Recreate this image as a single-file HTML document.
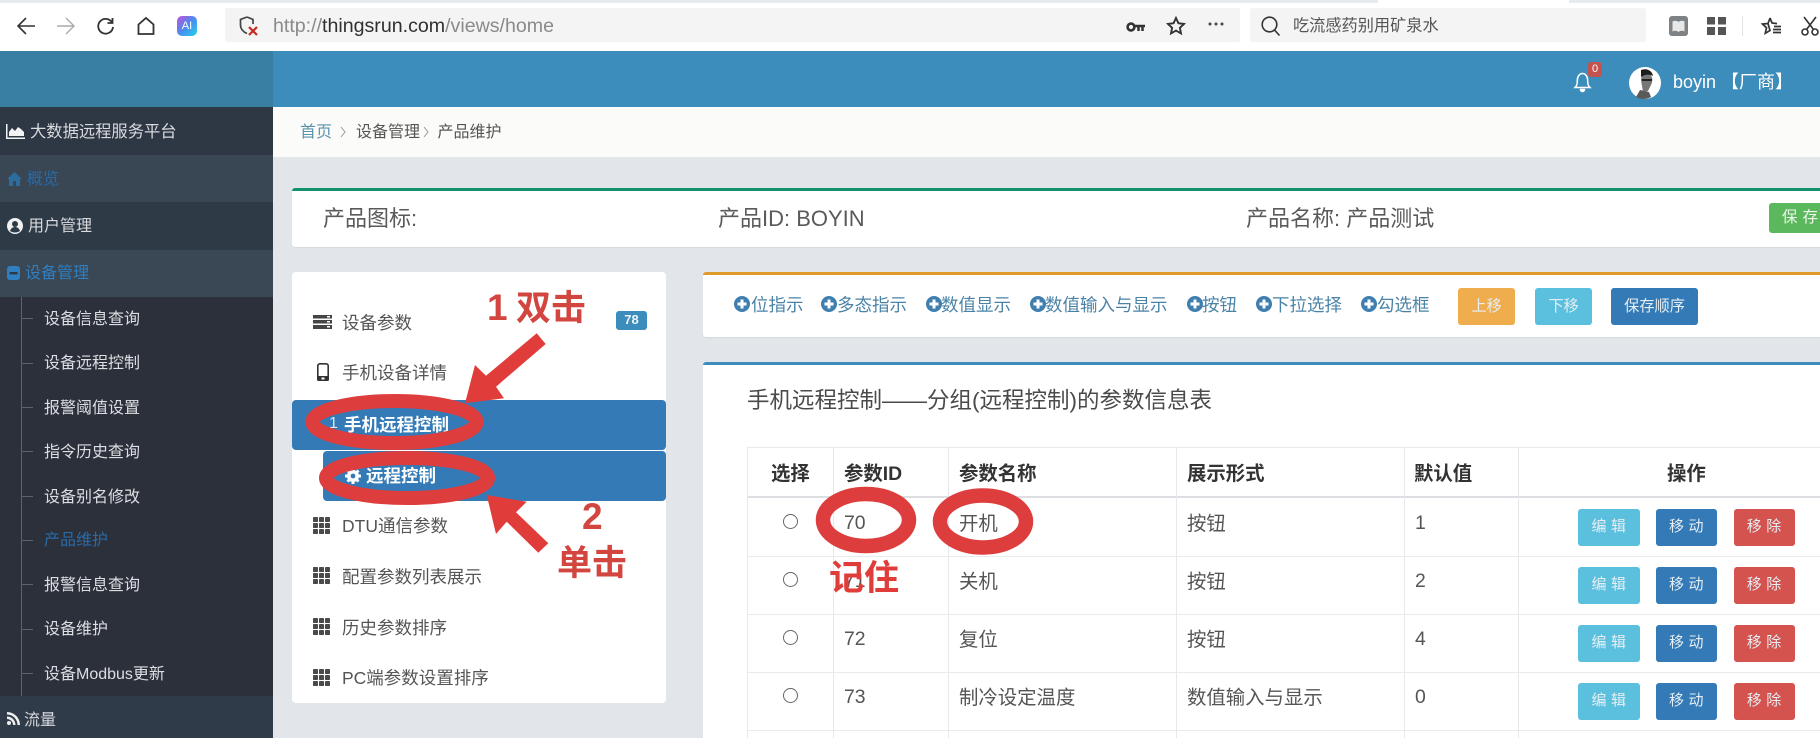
<!DOCTYPE html>
<html lang="zh"><head><meta charset="utf-8"><title>产品维护</title>
<style>
html,body{margin:0;padding:0;width:1820px;height:738px;overflow:hidden;background:#e2e6eb}
body{position:relative;font-family:"Liberation Sans","Noto Sans CJK SC",sans-serif;color:#333}
.b{position:absolute}
.t{position:absolute;white-space:nowrap;line-height:30px;height:30px}
svg.i{position:absolute;overflow:visible}
.s{font-size:16px;color:#d8dade}
.sub{font-size:16px;color:#dcdfe2;left:44px}
.d{position:absolute;left:22px;width:11px;height:1px;background:#5d626c}
.m{font-size:17.5px;color:#555;left:342px}
.l{font-size:17.5px;color:#4a83a8}
.pl{position:absolute;width:16px;height:16px}
.th{font-size:19.4px;font-weight:700;color:#333}
.td{font-size:19.4px;color:#555}
.v{position:absolute;top:447px;height:291px;width:1px;background:#e6e8eb}
.h{position:absolute;left:747px;width:1073px;height:1px;background:#e8eaed}
.r{position:absolute;left:782.5px;width:13px;height:13px;border:1px solid #666;border-radius:50%;background:#fff}
.btn{position:absolute;height:37px;border-radius:3px;color:#e6eef3;font-size:15px;line-height:36px;text-align:center;letter-spacing:4.500px;text-indent:4px}
.bi{left:1578px;width:62px;background:#5bc0de}
.bm{left:1656px;width:61px;background:#337ab7}
.br{left:1734px;width:60.5px;background:#d4534e}
.tb{position:absolute;top:288px;height:37px;border-radius:3px;color:#e6eef3;font-size:15.200px;line-height:37px;text-align:center}
</style></head><body>

<!-- browser chrome -->
<div class="b" style="left:0;top:0;width:1820px;height:51px;background:#fff"></div>
<div class="b" style="left:0;top:0;width:1378px;height:3px;background:#e8ebee"></div>
<div class="b" style="left:1569px;top:0;width:251px;height:3px;background:#e8ebee"></div>
<svg class="i" style="left:16px;top:16px" width="20" height="20" viewBox="0 0 20 20" fill="none" stroke="#333" stroke-width="1.6"><path d="M19 10H2M10 2L2 10l8 8"/></svg>
<svg class="i" style="left:56px;top:16px" width="20" height="20" viewBox="0 0 20 20" fill="none" stroke="#aaa" stroke-width="1.4"><path d="M1 10h17M10 2l8 8-8 8"/></svg>
<svg class="i" style="left:97px;top:17px" width="18" height="18" viewBox="0 0 18 18" fill="none" stroke="#333" stroke-width="1.8"><path d="M15 5.500A7.400 7.400 0 1 0 16 10M15.500 1v5h-5"/></svg>
<svg class="i" style="left:137px;top:17px" width="18" height="18" viewBox="0 0 18 18" fill="none" stroke="#333" stroke-width="1.8"><path d="M1.500 17V7.500L9 1l7.500 6.500V17z"/></svg>
<div class="b" style="left:177px;top:16px;width:20px;height:20px;border-radius:5px;background:linear-gradient(135deg,#c44fd8 0%,#4a8df0 50%,#22d3e6 100%);color:#fff;font-size:11px;line-height:20px;text-align:center">AI</div>
<div class="b" style="left:225px;top:8px;width:1015px;height:34px;background:#f4f4f4;border-radius:2px"></div>
<svg class="i" style="left:239px;top:15px" width="20" height="22" viewBox="0 0 20 22" fill="none"><path d="M8 2L1.500 4.500V10c0 4 3 7 6.500 8.500" stroke="#444" stroke-width="1.700"/><path d="M8 2l6 2.500V9" stroke="#444" stroke-width="1.700"/><path d="M10 12l8 8M18 12l-8 8" stroke="#c8281e" stroke-width="2.200"/></svg>
<div class="t" style="left:273px;top:11px;font-size:19.600px;color:#8a8a8a">http://<span style="color:#2f2f2f">thingsrun.com</span>/views/home</div>
<svg class="i" style="left:1126px;top:21px" width="20" height="12" viewBox="0 0 20 12" fill="none" stroke="#333"><circle cx="5" cy="6" r="3.400" stroke-width="2.600"/><path d="M9 5h10M12.500 5v5M16.500 5v5" stroke-width="2.500"/></svg>
<svg class="i" style="left:1166px;top:16px" width="20" height="20" viewBox="0 0 20 20" fill="none" stroke="#333" stroke-width="1.900"><path d="M10 2l2.400 5.200 5.600.7-4.100 3.900 1.100 5.600L10 14.600 5 17.400l1.100-5.600L2 7.900l5.600-.7z"/></svg>
<svg class="i" style="left:1208px;top:22px" width="16" height="4" viewBox="0 0 16 4" fill="#444"><circle cx="2" cy="2" r="1.500"/><circle cx="8" cy="2" r="1.500"/><circle cx="14" cy="2" r="1.500"/></svg>
<div class="b" style="left:1250px;top:8px;width:396px;height:34px;background:#f4f4f4;border-radius:3px"></div>
<svg class="i" style="left:1261px;top:16px" width="20" height="20" viewBox="0 0 20 20" fill="none" stroke="#333" stroke-width="1.600"><circle cx="8.500" cy="8.500" r="7.300"/><path d="M13.500 14l5 5.500"/></svg>
<div class="t" style="left:1293px;top:11px;font-size:16.200px;color:#555">吃流感药别用矿泉水</div>
<svg class="i" style="left:1669px;top:16px" width="19" height="20" viewBox="0 0 19 20"><rect width="19" height="20" rx="3" fill="#7f8285"/><path d="M3.500 5.500c2-1 4-1 6 .5v10c-2-1.500-4-1.500-6-.5zM15.500 5.500c-2-1-4-1-6 .5v10c2-1.500 4-1.500 6-.5z" fill="#e8e8e8"/></svg>
<svg class="i" style="left:1707px;top:17px" width="19" height="18" viewBox="0 0 19 18" fill="#555"><rect width="8" height="7.500"/><rect x="11" width="8" height="7.500"/><rect y="10" width="8" height="8"/><rect x="11" y="10" width="8" height="8"/></svg>
<div class="b" style="left:1742px;top:16px;width:1px;height:20px;background:#e3e3e3"></div>
<svg class="i" style="left:1761px;top:16px" width="21" height="20" viewBox="0 0 21 20" fill="none" stroke="#333" stroke-width="1.700"><path d="M9 2l2 5 5 .6M7 7.500L1.500 8l4 3.700-1.200 5.600L9 14.500zM9 2L7 7.500M13 10.500h7M12 13.500h8M12 16.500h8"/></svg>
<svg class="i" style="left:1801px;top:16px" width="18" height="20" viewBox="0 0 18 20" fill="none" stroke="#333" stroke-width="1.600"><circle cx="4" cy="16" r="3"/><circle cx="14" cy="16" r="3"/><path d="M5.500 13.500L15 1M12.500 13.500L3 1"/></svg>

<!-- app header -->
<div class="b" style="left:0;top:51px;width:273px;height:56px;background:#387fa3"></div>
<div class="b" style="left:273px;top:51px;width:1547px;height:56px;background:#3c8dbc"></div>
<svg class="i" style="left:1574px;top:71px" width="17" height="21" viewBox="0 0 17 21" fill="none" stroke="#fff" stroke-width="1.500"><path d="M1 16.500c2-2 2.300-3.500 2.300-7C3.300 5.500 5.500 2.500 8.500 2.500s5.200 3 5.200 7c0 3.500.3 5 2.300 7z"/><path d="M6.500 18.500a2 2 0 0 0 4 0z" fill="#fff"/></svg>
<div class="b" style="left:1588px;top:62px;width:14px;height:15px;background:#c4534f;border-radius:3px;color:#fff;font-size:11px;line-height:15px;text-align:center">0</div>
<svg class="i" style="left:1629px;top:67px" width="32" height="32" viewBox="0 0 32 32"><circle cx="16" cy="16" r="16" fill="#fff"/><path d="M12 13c0-5 4-8 8-6 4 2 4 7 2 11l-3 6-5 1z" fill="#777"/><path d="M12 3c5-2 11 0 12 6-4-2-8-2-12 1z" fill="#1d1d1d"/><path d="M13 12h10v2H13z" fill="#222"/><path d="M7 30l4-7 9 2 2 5a16 16 0 0 1-15 0z" fill="#5a5a5a"/></svg>
<div class="t" style="left:1673px;top:67px;font-size:18px;color:#fff">boyin 【厂商】</div>

<!-- sidebar -->
<div class="b" style="left:0;top:107px;width:273px;height:48px;background:#2e3744"></div>
<div class="b" style="left:0;top:155px;width:273px;height:47px;background:#394654"></div>
<div class="b" style="left:0;top:202px;width:273px;height:48px;background:#2f3a47"></div>
<div class="b" style="left:0;top:250px;width:273px;height:47px;background:#3a4755"></div>
<div class="b" style="left:0;top:297px;width:273px;height:399px;background:#2c303b"></div>
<div class="b" style="left:0;top:696px;width:273px;height:42px;background:#303b49"></div>

<svg class="i" style="left:6px;top:124px" width="19" height="15" viewBox="0 0 19 15"><path d="M0 0h1.500v13.500H19V15H0z" fill="#f2f2f2"/><path d="M3 12V8l3-4 3 3 3-4 3 2 3 3v4z" fill="#f2f2f2"/></svg>
<div class="t s" style="left:30px;top:117px;font-size:16.300px">大数据远程服务平台</div>
<svg class="i" style="left:7px;top:172px" width="15" height="14" viewBox="0 0 15 14" fill="#2f6c9e"><path d="M7.500 0L0 7h2v7h4V9h3v5h4V7h2z"/></svg>
<div class="t" style="left:27px;top:165px;font-size:16px;color:#2a6aa6">概览</div>
<svg class="i" style="left:7px;top:218px" width="16" height="16" viewBox="0 0 16 16"><circle cx="8" cy="8" r="8" fill="#f1f1f1"/><circle cx="8" cy="6" r="3" fill="#2f3a47"/><path d="M3 13c1-3 3-4 5-4s4 1 5 4c-3 2-7 2-10 0z" fill="#2f3a47"/></svg>
<div class="t s" style="left:28px;top:212px">用户管理</div>
<svg class="i" style="left:7px;top:266px" width="13" height="14" viewBox="0 0 13 14"><rect width="13" height="14" rx="3" fill="#2f7fc1"/><rect x="2.500" y="6" width="8" height="2.400" fill="#2b3a4a"/></svg>
<div class="t" style="left:25px;top:259px;font-size:16px;color:#2f7fc1">设备管理</div>

<div class="b" style="left:21px;top:297px;width:1px;height:399px;background:#5d626c"></div>
<div class="d" style="top:318px"></div><div class="d" style="top:363px"></div><div class="d" style="top:407px"></div><div class="d" style="top:451px"></div><div class="d" style="top:496px"></div><div class="d" style="top:540px"></div><div class="d" style="top:584px"></div><div class="d" style="top:629px"></div><div class="d" style="top:673px"></div>
<div class="t sub" style="top:305px">设备信息查询</div>
<div class="t sub" style="top:349px">设备远程控制</div>
<div class="t sub" style="top:394px">报警阈值设置</div>
<div class="t sub" style="top:438px">指令历史查询</div>
<div class="t sub" style="top:483px">设备别名修改</div>
<div class="t sub" style="top:526px;color:#2a6aa6">产品维护</div>
<div class="t sub" style="top:571px">报警信息查询</div>
<div class="t sub" style="top:615px">设备维护</div>
<div class="t sub" style="top:660px">设备Modbus更新</div>
<svg class="i" style="left:7px;top:712px" width="13" height="13" viewBox="0 0 13 13" fill="#eee"><circle cx="2" cy="11" r="2"/><path d="M0 4.500v2.500a6 6 0 0 1 6 6h2.500A8.500 8.500 0 0 0 0 4.500zM0 0v2.500A10.500 10.500 0 0 1 10.500 13H13A13 13 0 0 0 0 0z"/></svg>
<div class="t s" style="left:24px;top:706px">流量</div>

<!-- breadcrumb -->
<div class="b" style="left:273px;top:107px;width:1547px;height:50px;background:#fbfbf9"></div>
<div class="t" style="left:300px;top:118px;font-size:16px;color:#5b93ac">首页</div>
<svg class="i" style="left:340px;top:126px" width="6" height="12" viewBox="0 0 6 12" fill="none" stroke="#999"><path d="M1 1l4 5-4 5"/></svg>
<div class="t" style="left:356px;top:118px;font-size:16px;color:#555">设备管理</div>
<svg class="i" style="left:423px;top:126px" width="6" height="12" viewBox="0 0 6 12" fill="none" stroke="#999"><path d="M1 1l4 5-4 5"/></svg>
<div class="t" style="left:437.500px;top:118px;font-size:16px;color:#555">产品维护</div>

<!-- product box -->
<div class="b" style="left:292px;top:188px;width:1528px;height:59px;background:#fff;border-top:3px solid #12926f;box-sizing:border-box;border-radius:3px 0 0 3px;box-shadow:0 1px 1px rgba(0,0,0,.06)"></div>
<div class="t" style="left:323px;top:204px;font-size:22px;color:#5a5a5a">产品图标:</div>
<div class="t" style="left:718px;top:204px;font-size:22px;color:#5a5a5a">产品ID: BOYIN</div>
<div class="t" style="left:1246px;top:204px;font-size:22px;color:#5a5a5a">产品名称: 产品测试</div>
<div class="b" style="left:1769px;top:203px;width:60px;height:30px;background:#5cb85c;border-radius:3px;color:#eef6ee;font-size:15.500px;line-height:29px;letter-spacing:5px;text-indent:13px;white-space:nowrap">保存</div>

<!-- left menu card -->
<div class="b" style="left:292px;top:272px;width:374px;height:431px;background:#fff;border-radius:4px"></div>
<svg class="i" style="left:313px;top:315px" width="19" height="14" viewBox="0 0 19 14" fill="#444"><rect width="19" height="3.500"/><rect y="5" width="19" height="3.500"/><rect y="10" width="19" height="4"/><path d="M14 1h3v1.500h-3zM14 6h3v1.500h-3zM14 11h3v1.500h-3z" fill="#fff"/></svg>
<div class="t m" style="top:308px">设备参数</div>
<div class="b" style="left:616px;top:311px;width:31px;height:19px;background:#3c8dbc;border-radius:3px;color:#eef5f9;font-size:13px;font-weight:700;line-height:18px;text-align:center">78</div>
<svg class="i" style="left:317px;top:363px" width="12" height="18" viewBox="0 0 12 18"><rect x=".8" y=".8" width="10.400" height="16.400" rx="2" fill="#fff" stroke="#333" stroke-width="1.600"/><rect y="13" width="12" height="5" rx="1.500" fill="#333"/><rect x="4.500" y="14.500" width="3" height="2" fill="#fff"/></svg>
<div class="t m" style="top:358px">手机设备详情</div>
<div class="b" style="left:292px;top:400px;width:374px;height:50px;background:#337ab7;border-radius:4px"></div>
<div class="b" style="left:323px;top:451px;width:343px;height:50px;background:#337ab7;border-radius:4px"></div>
<div class="t" style="left:329px;top:409px;font-size:16px;color:#dbe8f2">1</div>
<div class="t" style="left:344px;top:410px;font-size:17.500px;font-weight:700;color:#fff">手机远程控制</div>
<svg class="i" style="left:345px;top:468px" width="16" height="16" viewBox="0 0 16 16"><circle cx="8" cy="8" r="4.200" fill="none" stroke="#fff" stroke-width="3.600"/><path d="M6.500 0h3v3h-3zM6.500 13h3v3h-3zM0 6.500h3v3H0zM13 6.500h3v3h-3zM1.500 3.500l2-2 2 2-2 2zM10.500 12.500l2-2 2 2-2 2zM12.500 1.500l2 2-2 2-2-2zM3.500 10.500l2 2-2 2-2-2z" fill="#fff"/></svg>
<div class="t" style="left:366px;top:461px;font-size:17.500px;font-weight:700;color:#fff">远程控制</div>
<div class="t m" style="top:511px">DTU通信参数</div>
<div class="t m" style="top:562px">配置参数列表展示</div>
<div class="t m" style="top:613px">历史参数排序</div>
<div class="t m" style="top:663px">PC端参数设置排序</div>
<svg width="0" height="0" style="position:absolute"><symbol id="g" viewBox="0 0 17 17"><g fill="#4a4a4a"><rect width="5" height="5" rx=".8"/><rect x="6" width="5" height="5" rx=".8"/><rect x="12" width="5" height="5" rx=".8"/><rect y="6" width="5" height="5" rx=".8"/><rect x="6" y="6" width="5" height="5" rx=".8"/><rect x="12" y="6" width="5" height="5" rx=".8"/><rect y="12" width="5" height="5" rx=".8"/><rect x="6" y="12" width="5" height="5" rx=".8"/><rect x="12" y="12" width="5" height="5" rx=".8"/></g></symbol>
<symbol id="p" viewBox="0 0 16 16"><circle cx="8" cy="8" r="8" fill="#3f7fb0"/><path d="M6.500 3.500h3v3h3v3h-3v3h-3v-3h-3v-3h3z" fill="#fff"/></symbol></svg>
<svg class="i" style="left:313px;top:517px" width="17" height="17"><use href="#g"/></svg>
<svg class="i" style="left:313px;top:567px" width="17" height="17"><use href="#g"/></svg>
<svg class="i" style="left:313px;top:618px" width="17" height="17"><use href="#g"/></svg>
<svg class="i" style="left:313px;top:669px" width="17" height="17"><use href="#g"/></svg>

<!-- toolbar panel -->
<div class="b" style="left:703px;top:272px;width:1117px;height:65px;background:#fff;border-top:3px solid #e09a2a;box-sizing:border-box;border-radius:3px 0 0 3px;box-shadow:0 1px 1px rgba(0,0,0,.06)"></div>
<svg class="pl" style="left:734px;top:296px"><use href="#p"/></svg><div class="t l" style="left:751px;top:290px">位指示</div>
<svg class="pl" style="left:821px;top:296px"><use href="#p"/></svg><div class="t l" style="left:837px;top:290px">多态指示</div>
<svg class="pl" style="left:926px;top:296px"><use href="#p"/></svg><div class="t l" style="left:941px;top:290px">数值显示</div>
<svg class="pl" style="left:1030px;top:296px"><use href="#p"/></svg><div class="t l" style="left:1045px;top:290px">数值输入与显示</div>
<svg class="pl" style="left:1187px;top:296px"><use href="#p"/></svg><div class="t l" style="left:1202px;top:290px">按钮</div>
<svg class="pl" style="left:1256px;top:296px"><use href="#p"/></svg><div class="t l" style="left:1272px;top:290px">下拉选择</div>
<svg class="pl" style="left:1361px;top:296px"><use href="#p"/></svg><div class="t l" style="left:1377px;top:290px">勾选框</div>
<div class="tb" style="left:1458px;width:57px;background:#f0ad4e">上移</div>
<div class="tb" style="left:1535px;width:57px;background:#5bc0de">下移</div>
<div class="tb" style="left:1611px;width:87px;background:#337ab7">保存顺序</div>

<!-- table panel -->
<div class="b" style="left:703px;top:362px;width:1117px;height:376px;background:#fff;border-top:3px solid #3c8dbc;box-sizing:border-box;border-radius:3px 0 0 0"></div>
<div class="t" style="left:747px;top:386px;font-size:22.500px;color:#4a4a4a">手机远程控制——分组(远程控制)的参数信息表</div>

<div class="h" style="top:447px"></div>
<div class="h" style="top:496px;height:2px;background:#dcdee1"></div>
<div class="h" style="top:556px"></div><div class="h" style="top:614px"></div><div class="h" style="top:672px"></div><div class="h" style="top:730px"></div>
<div class="v" style="left:747px"></div><div class="v" style="left:833px"></div><div class="v" style="left:948px"></div><div class="v" style="left:1176px"></div><div class="v" style="left:1404px"></div><div class="v" style="left:1518px"></div>

<div class="t th" style="left:771px;top:459px">选择</div>
<div class="t th" style="left:844px;top:459px">参数ID</div>
<div class="t th" style="left:959px;top:459px">参数名称</div>
<div class="t th" style="left:1187px;top:459px">展示形式</div>
<div class="t th" style="left:1414px;top:459px">默认值</div>
<div class="t th" style="left:1667px;top:459px">操作</div>

<div class="r" style="top:514px"></div><div class="r" style="top:572px"></div><div class="r" style="top:630px"></div><div class="r" style="top:688px"></div>

<div class="t td" style="left:844px;top:508px">70</div><div class="t td" style="left:959px;top:509px">开机</div><div class="t td" style="left:1187px;top:509px">按钮</div><div class="t td" style="left:1415px;top:508px">1</div>
<div class="t td" style="left:844px;top:566px">71</div><div class="t td" style="left:959px;top:567px">关机</div><div class="t td" style="left:1187px;top:567px">按钮</div><div class="t td" style="left:1415px;top:566px">2</div>
<div class="t td" style="left:844px;top:624px">72</div><div class="t td" style="left:959px;top:625px">复位</div><div class="t td" style="left:1187px;top:625px">按钮</div><div class="t td" style="left:1415px;top:624px">4</div>
<div class="t td" style="left:844px;top:682px">73</div><div class="t td" style="left:959px;top:683px">制冷设定温度</div><div class="t td" style="left:1187px;top:683px">数值输入与显示</div><div class="t td" style="left:1415px;top:682px">0</div>

<div class="btn bi" style="top:509px">编辑</div><div class="btn bm" style="top:509px">移动</div><div class="btn br" style="top:509px">移除</div>
<div class="btn bi" style="top:567px">编辑</div><div class="btn bm" style="top:567px">移动</div><div class="btn br" style="top:567px">移除</div>
<div class="btn bi" style="top:625px">编辑</div><div class="btn bm" style="top:625px">移动</div><div class="btn br" style="top:625px">移除</div>
<div class="btn bi" style="top:683px">编辑</div><div class="btn bm" style="top:683px">移动</div><div class="btn br" style="top:683px">移除</div>

<!-- red annotations -->
<svg class="i" style="left:0;top:0" width="1820" height="738" viewBox="0 0 1820 738" fill="none">
<ellipse cx="394.500" cy="422" rx="82" ry="21" stroke="#de3d3d" stroke-width="14"/>
<ellipse cx="407" cy="478" rx="81" ry="20" stroke="#de3d3d" stroke-width="14"/>
<ellipse cx="866" cy="520" rx="43" ry="26" stroke="#de3d3d" stroke-width="14.500"/>
<ellipse cx="983" cy="521.500" rx="43" ry="26" stroke="#de3d3d" stroke-width="14.500"/>
<path d="M536.700 333.300L545.700 344 496 386.700 504 398.300 465 403.300 475 365 486 375.700z" fill="#e03c3a"/>
<path d="M486.700 495L526.700 501.700 516 512.300 548.300 543.300 538.300 552.700 506.700 521.700 496 534z" fill="#e03c3a"/>
<text x="487" y="320" font-size="37" font-weight="700" fill="#d2463f" font-family="'Liberation Sans','Noto Sans CJK SC',sans-serif">1</text>
<text x="516" y="320" font-size="35" font-weight="700" fill="#d2463f" font-family="'Liberation Sans','Noto Sans CJK SC',sans-serif">双击</text>
<text x="582" y="529" font-size="37" font-weight="700" fill="#d2463f" font-family="'Liberation Sans','Noto Sans CJK SC',sans-serif">2</text>
<text x="557" y="575" font-size="35" font-weight="700" fill="#d2463f" font-family="'Liberation Sans','Noto Sans CJK SC',sans-serif">单击</text>
<text x="829" y="590" font-size="35" font-weight="700" fill="#e03c3a" font-family="'Liberation Sans','Noto Sans CJK SC',sans-serif">记住</text>
</svg>
</body></html>
